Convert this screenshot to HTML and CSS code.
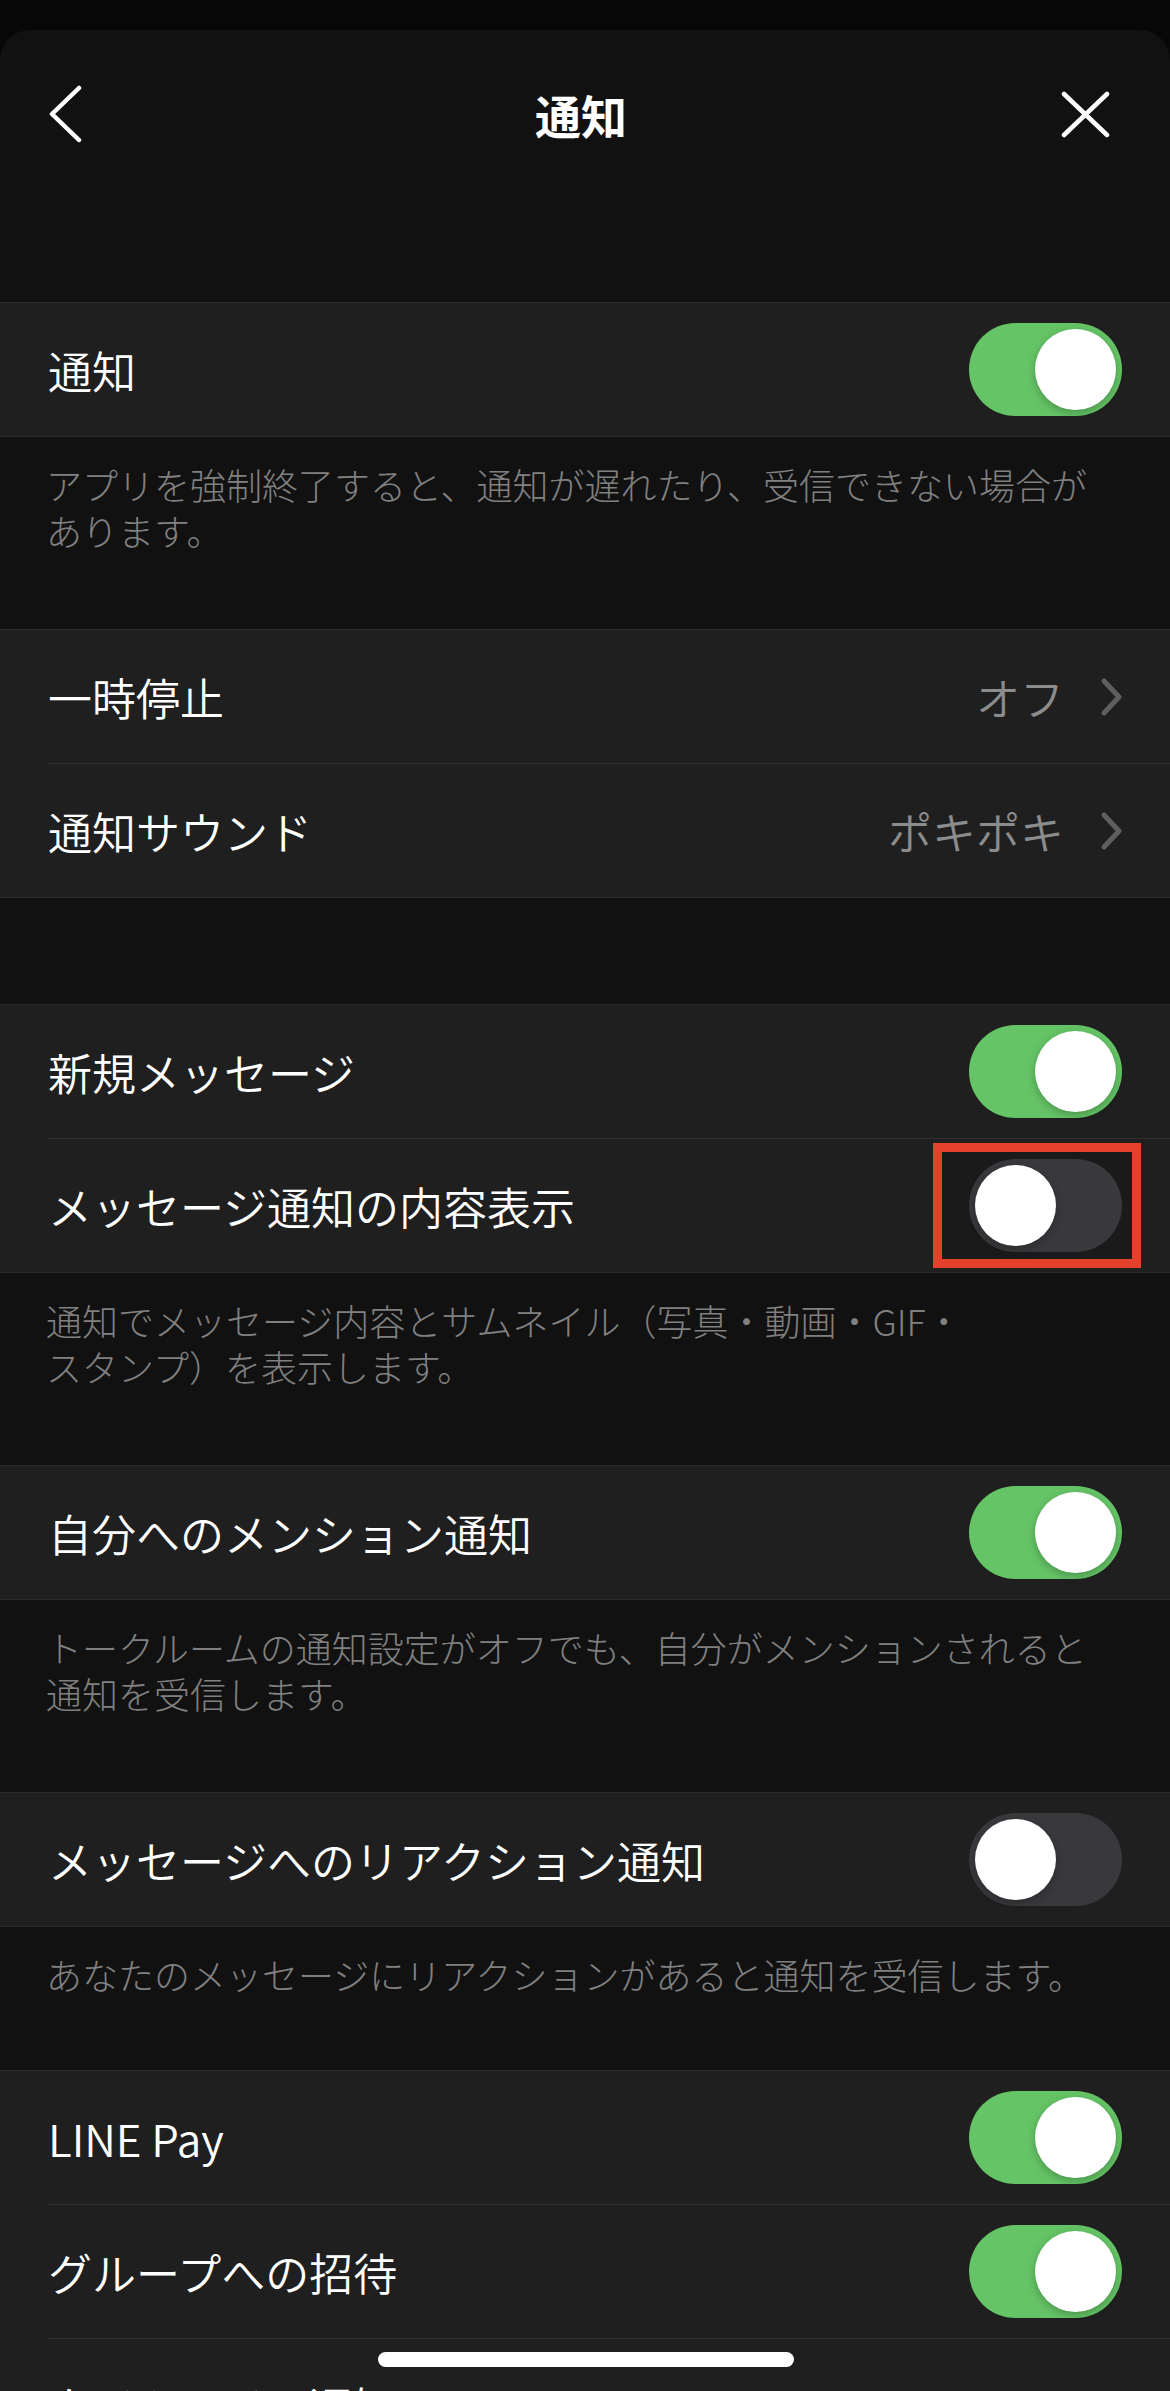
FILE: index.html
```html
<!DOCTYPE html>
<html lang="ja">
<head>
    <meta charset="UTF-8">
    <meta name="viewport" content="width=device-width, initial-scale=1.0">
    <title>通知</title>
    <link rel="stylesheet" href="styles.css">
</head>
<body>

    <div class="screen">

        <!-- Nagłówek -->
        <div class="header">
            <svg class="back" width="40" height="60" viewBox="0 0 40 60">
                <polyline points="31,3 4,29 31,55" fill="none" stroke="#fff" stroke-width="4.5" stroke-linecap="round" stroke-linejoin="round"/>
            </svg>
            <h1 class="title">通知</h1>
            <svg class="close" width="52" height="48" viewBox="0 0 52 48">
                <line x1="4" y1="3" x2="47" y2="44" stroke="#fff" stroke-width="4.5" stroke-linecap="round"/>
                <line x1="47" y1="3" x2="4" y2="44" stroke="#fff" stroke-width="4.5" stroke-linecap="round"/>
            </svg>
        </div>

        <div class="list">
            <div class="section">
                <div class="row">
                    <div class="row-body">
                        <span class="label">通知</span>
                        <span class="toggle on"><span class="knob"></span></span>
                    </div>
                </div>
            </div>
            <p class="desc">アプリを強制終了すると、通知が遅れたり、受信できない場合があります。</p>

            <div class="section">
                <div class="row">
                    <div class="row-body">
                        <span class="label">一時停止</span>
                        <span class="value">オフ</span>
                        <svg class="chevron" width="24" height="38" viewBox="0 0 24 38">
                            <polyline points="4,3 19,19 4,35" fill="none" stroke="#5e5e5e" stroke-width="5" stroke-linecap="round" stroke-linejoin="round"/>
                        </svg>
                    </div>
                </div>
                <div class="row">
                    <div class="row-body">
                        <span class="label">通知サウンド</span>
                        <span class="value">ポキポキ</span>
                        <svg class="chevron" width="24" height="38" viewBox="0 0 24 38">
                            <polyline points="4,3 19,19 4,35" fill="none" stroke="#5e5e5e" stroke-width="5" stroke-linecap="round" stroke-linejoin="round"/>
                        </svg>
                    </div>
                </div>
            </div>
            <div class="spacer"></div>

            <div class="section">
                <div class="row">
                    <div class="row-body">
                        <span class="label">新規メッセージ</span>
                        <span class="toggle on"><span class="knob"></span></span>
                    </div>
                </div>
                <div class="row">
                    <div class="row-body">
                        <span class="label">メッセージ通知の内容表示</span>
                        <span class="highlight">
                            <span class="toggle"><span class="knob"></span></span>
                        </span>
                    </div>
                </div>
            </div>
            <p class="desc">通知でメッセージ内容とサムネイル（写真・動画・GIF・<br>スタンプ）を表示します。</p>

            <div class="section">
                <div class="row">
                    <div class="row-body">
                        <span class="label">自分へのメンション通知</span>
                        <span class="toggle on"><span class="knob"></span></span>
                    </div>
                </div>
            </div>
            <p class="desc">トークルームの通知設定がオフでも、自分がメンションされると<br>通知を受信します。</p>

            <div class="section">
                <div class="row">
                    <div class="row-body">
                        <span class="label">メッセージへのリアクション通知</span>
                        <span class="toggle"><span class="knob"></span></span>
                    </div>
                </div>
            </div>
            <p class="desc single">あなたのメッセージにリアクションがあると通知を受信します。</p>

            <div class="section">
                <div class="row">
                    <div class="row-body">
                        <span class="label">LINE Pay</span>
                        <span class="toggle on"><span class="knob"></span></span>
                    </div>
                </div>
                <div class="row">
                    <div class="row-body">
                        <span class="label">グループへの招待</span>
                        <span class="toggle on"><span class="knob"></span></span>
                    </div>
                </div>
                <div class="row">
                    <div class="row-body">
                        <span class="label">タイムライン通知</span>
                    </div>
                </div>
            </div>
        </div>

        <!-- Pasek domowy -->
        <div class="home-bar"></div>
    </div>

</body>
</html>
```

FILE: styles.css
```css
* {
    box-sizing: border-box;
}

body {
    margin: 0;
    background-color: #070707;
    font-family: "Noto Sans CJK JP", "Noto Sans", sans-serif;
    color: #fff;
}

.screen {
    position: relative;
    height: 2391px;
    overflow: hidden;
    padding-top: 30px;
}

.header,
.list {
    background-color: #111111;
}

.header {
    height: 168px;
    display: flex;
    align-items: center;
    justify-content: space-between;
    padding: 0 58px 0 48px;
    border-radius: 30px 30px 0 0;
}

.title {
    margin: 0;
    font-size: 46px;
    font-weight: bold;
    line-height: 1;
    padding-left: 14px;
}

.back {
    margin-top: 2px;
}

.close {
    margin-top: 2px;
}

.list {
    padding-top: 104px;
    min-height: 2300px;
}

.section {
    background-color: #1f1f1f;
    border-top: 1px solid #2a2a2a;
    border-bottom: 1px solid #2a2a2a;
}

.row {
    padding-left: 48px;
}

.row-body {
    height: 133px;
    display: flex;
    align-items: center;
    padding-right: 48px;
}

.row + .row .row-body {
    height: 134px;
    border-top: 1px solid #2f2f2f;
}

.label {
    flex: 1;
    font-size: 44px;
    font-weight: 350;
    line-height: 1;
    white-space: nowrap;
}

.value {
    font-size: 44px;
    font-weight: 350;
    line-height: 1;
    color: #8c8c8c;
    margin-right: 36px;
}

.chevron {
    margin-right: -2px;
}

/* Przełącznik */
.toggle {
    position: relative;
    width: 153px;
    height: 93px;
    border-radius: 47px;
    background-color: #39393d;
    flex-shrink: 0;
}

.toggle.on {
    background-color: #65c466;
}

.knob {
    position: absolute;
    top: 6px;
    left: 6px;
    width: 81px;
    height: 81px;
    border-radius: 50%;
    background-color: #fff;
    box-shadow: 0 3px 8px rgba(0, 0, 0, 0.25);
}

.toggle.on .knob {
    left: auto;
    right: 6px;
}

.highlight {
    display: flex;
    padding: 7px 10px 7px 27px;
    margin-right: -19px;
    border: 9px solid #e5412a;
    background-color: #1a1a1a;
}

.desc {
    margin: 0;
    padding: 24px 48px 76px 46px;
    font-size: 36px;
    font-weight: 300;
    line-height: 46px;
    color: #808080;
}

.desc.single {
    padding-bottom: 73px;
}

.spacer {
    height: 106px;
}

.home-bar {
    position: absolute;
    left: 378px;
    bottom: 24px;
    width: 416px;
    height: 15px;
    border-radius: 8px;
    background-color: #fff;
}
```
